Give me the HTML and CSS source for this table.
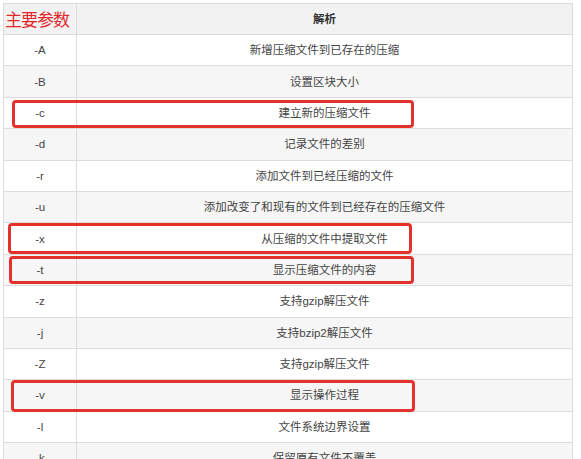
FILE: index.html
```html
<!DOCTYPE html>
<html lang="zh">
<head>
<meta charset="utf-8">
<link rel="stylesheet" href="styles.css">
</head>
<body>
<div class="wrap">
  <table class="opts">
    <thead>
      <tr><th class="c1"><span class="anno">主要参数</span></th><th class="c2">解析</th></tr>
    </thead>
    <tbody>
      <tr><td class="c1">-A</td><td class="c2">新增压缩文件到已存在的压缩</td></tr>
      <tr><td class="c1">-B</td><td class="c2">设置区块大小</td></tr>
      <tr><td class="c1">-c</td><td class="c2">建立新的压缩文件</td></tr>
      <tr><td class="c1">-d</td><td class="c2">记录文件的差别</td></tr>
      <tr><td class="c1">-r</td><td class="c2">添加文件到已经压缩的文件</td></tr>
      <tr><td class="c1">-u</td><td class="c2">添加改变了和现有的文件到已经存在的压缩文件</td></tr>
      <tr><td class="c1">-x</td><td class="c2">从压缩的文件中提取文件</td></tr>
      <tr><td class="c1">-t</td><td class="c2">显示压缩文件的内容</td></tr>
      <tr><td class="c1">-z</td><td class="c2">支持gzip解压文件</td></tr>
      <tr><td class="c1">-j</td><td class="c2">支持bzip2解压文件</td></tr>
      <tr><td class="c1">-Z</td><td class="c2">支持gzip解压文件</td></tr>
      <tr><td class="c1">-v</td><td class="c2">显示操作过程</td></tr>
      <tr><td class="c1">-l</td><td class="c2">文件系统边界设置</td></tr>
      <tr><td class="c1">-k</td><td class="c2">保留原有文件不覆盖</td></tr>
    </tbody>
  </table>
  <div class="mark m-c"></div>
  <div class="mark m-x"></div>
  <div class="mark m-t"></div>
  <div class="mark m-v"></div>
</div>
</body>
</html>
```
FILE: styles.css
```css
html, body {
  margin: 0;
  padding: 0;
  background: #ffffff;
  overflow: hidden;
}
body {
  font-family: "Liberation Sans", "Noto Sans CJK SC", sans-serif;
  font-size: 11.5px;
  color: #444444;
}
.wrap {
  position: relative;
  padding: 3px 0 0 3px;
  width: 570px;
}
.opts {
  border-collapse: collapse;
  width: 570px;
  table-layout: fixed;
}
.opts th, .opts td {
  border: 1px solid #dddddd;
  text-align: center;
  padding: 0;
  height: 30.4px;
  line-height: 14px;
}
.opts th {
  background: #f2f2f2;
  font-weight: bold;
  height: 30px;
  color: #333333;
}
.opts .c1 { width: 72px; }
.opts tbody tr:nth-child(even) td { background: #f6f6f6; }
.opts thead .c1 { text-align: left; }
.anno {
  display: inline-block;
  margin-left: 1px;
  color: #e2272a;
  font-family: "Noto Sans CJK SC", sans-serif;
  font-size: 17px;
  font-weight: normal;
  letter-spacing: -1px;
  line-height: 20px;
}
.mark {
  position: absolute;
  border: 3px solid #e4312b;
  border-radius: 4px;
  box-sizing: border-box;
}
.m-c { left: 12px; top: 100px; width: 402px; height: 28px; }
.m-x { left: 8px; top: 223px; width: 404px; height: 31px; }
.m-t { left: 9px; top: 256px; width: 405px; height: 28px; }
.m-v { left: 11px; top: 380px; width: 404px; height: 32px; }
```
